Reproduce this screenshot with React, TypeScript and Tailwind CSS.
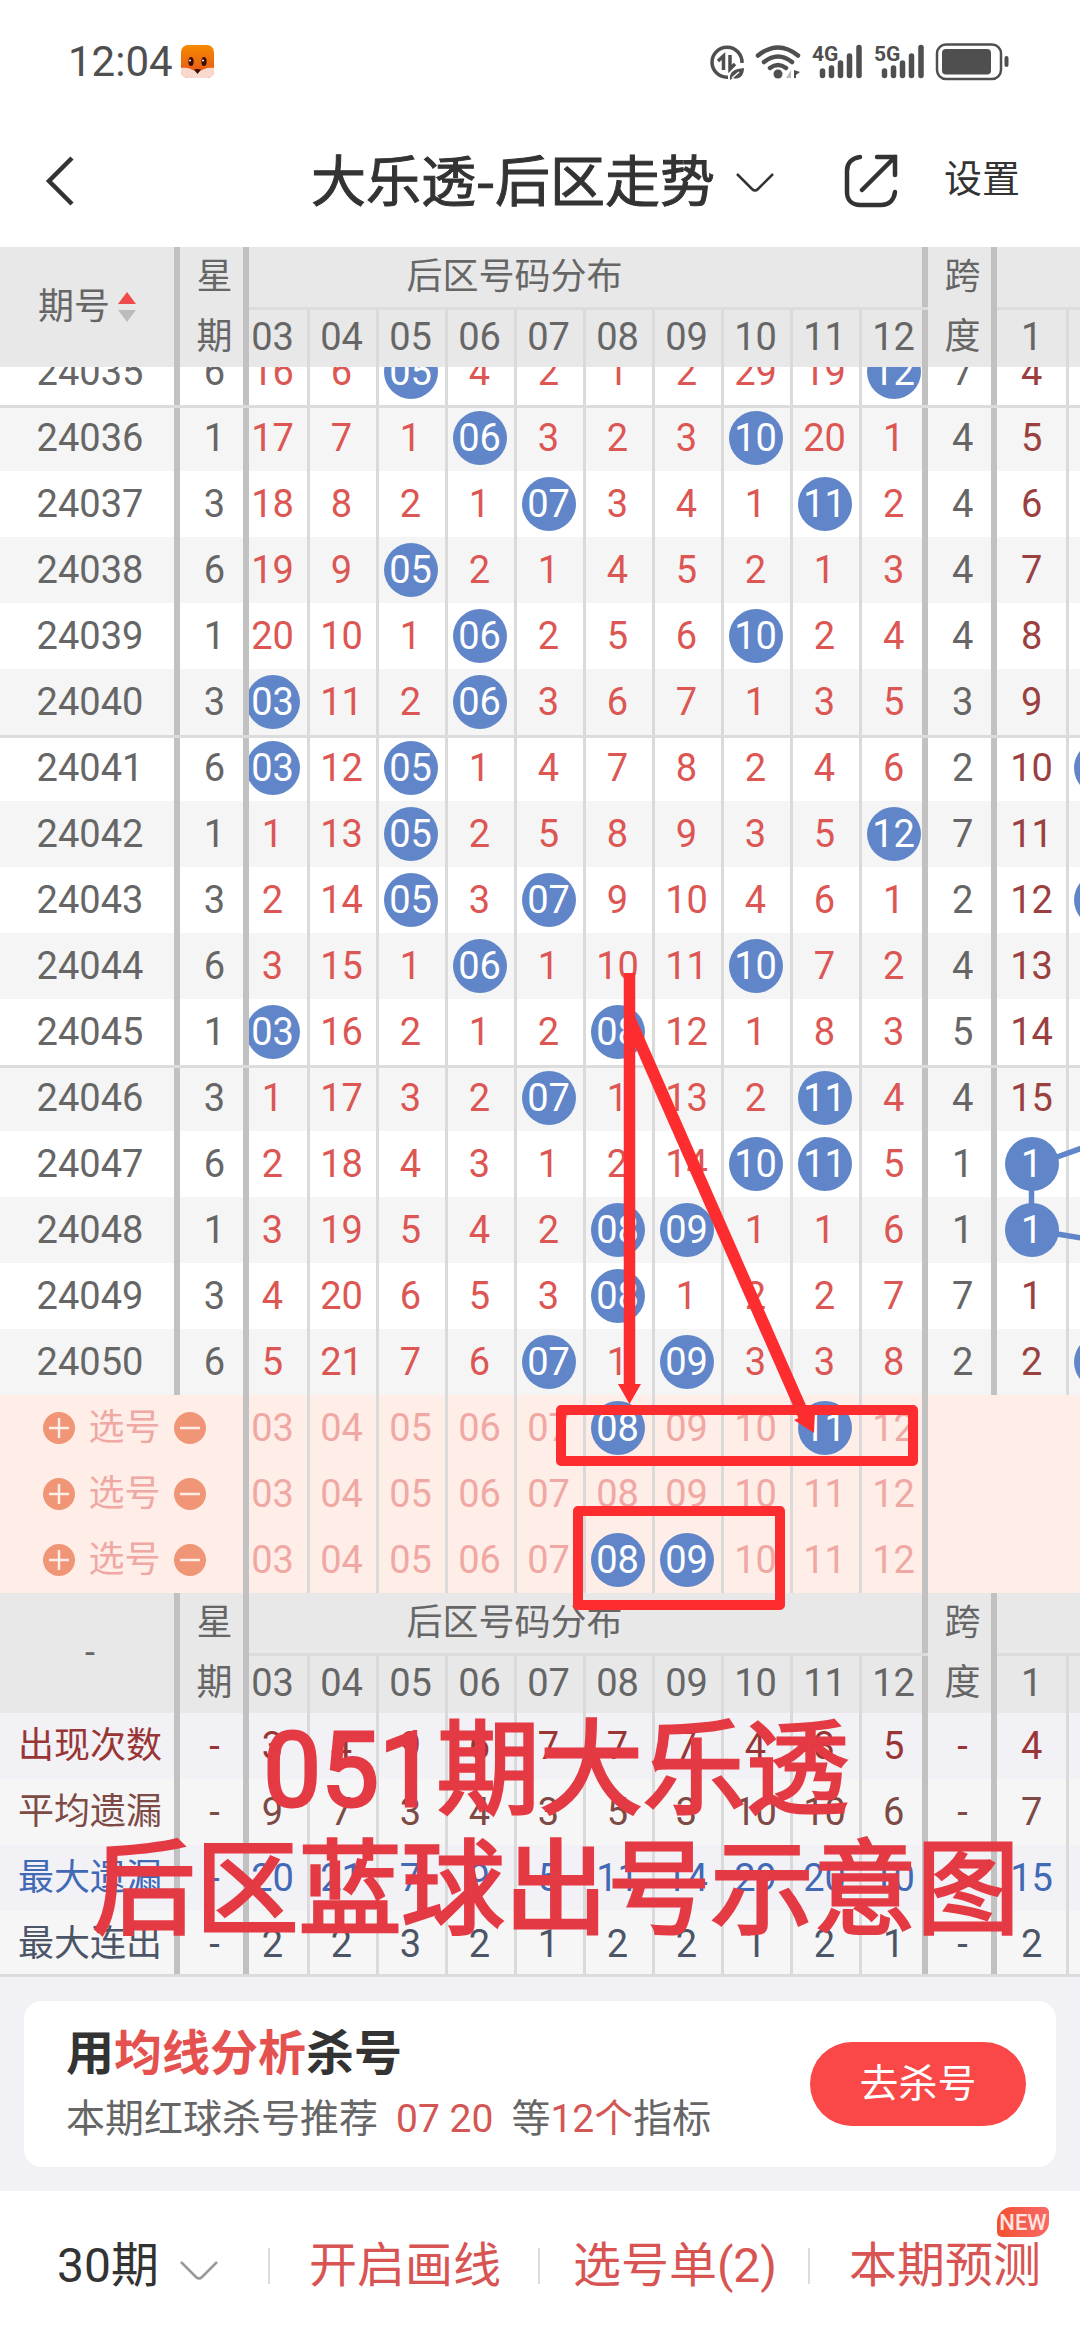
import type { ReactNode } from "react";

const COLUMNS = ["03", "04", "05", "06", "07", "08", "09", "10", "11", "12"];

// Values that start with * are drawn numbers, the others count missed draws
const DRAWS = [
  { id: "24035", day: 6, row: "16 6 *05 4 2 1 2 29 19 *12", span: 7, one: "4" },
  { id: "24036", day: 1, row: "17 7 1 *06 3 2 3 *10 20 1", span: 4, one: "5" },
  { id: "24037", day: 3, row: "18 8 2 1 *07 3 4 1 *11 2", span: 4, one: "6" },
  { id: "24038", day: 6, row: "19 9 *05 2 1 4 5 2 1 3", span: 4, one: "7" },
  { id: "24039", day: 1, row: "20 10 1 *06 2 5 6 *10 2 4", span: 4, one: "8" },
  { id: "24040", day: 3, row: "*03 11 2 *06 3 6 7 1 3 5", span: 3, one: "9" },
  { id: "24041", day: 6, row: "*03 12 *05 1 4 7 8 2 4 6", span: 2, one: "10", next: true },
  { id: "24042", day: 1, row: "1 13 *05 2 5 8 9 3 5 *12", span: 7, one: "11" },
  { id: "24043", day: 3, row: "2 14 *05 3 *07 9 10 4 6 1", span: 2, one: "12", next: true },
  { id: "24044", day: 6, row: "3 15 1 *06 1 10 11 *10 7 2", span: 4, one: "13" },
  { id: "24045", day: 1, row: "*03 16 2 1 2 *08 12 1 8 3", span: 5, one: "14" },
  { id: "24046", day: 3, row: "1 17 3 2 *07 1 13 2 *11 4", span: 4, one: "15" },
  { id: "24047", day: 6, row: "2 18 4 3 1 2 14 *10 *11 5", span: 1, one: "*1" },
  { id: "24048", day: 1, row: "3 19 5 4 2 *08 *09 1 1 6", span: 1, one: "*1" },
  { id: "24049", day: 3, row: "4 20 6 5 3 *08 1 2 2 7", span: 7, one: "1" },
  { id: "24050", day: 6, row: "5 21 7 6 *07 1 *09 3 3 8", span: 2, one: "2", next: true },
];

const PICKS = [["08", "11"], [], ["08", "09"]];

const STATS = [
  { label: "出现次数", row: "3 4 9 6 7 7 7 4 3 5", one: "4", color: "bg-[#f2f1f6] text-[#993535]" },
  { label: "平均遗漏", row: "9 7 3 4 3 5 3 10 10 6", one: "7", color: "bg-[#f6f6f6] text-[#7d4a45]" },
  { label: "最大遗漏", row: "20 21 7 9 5 11 14 29 20 10", one: "15", color: "bg-[#f2f1f6] text-[#4169b5]" },
  { label: "最大连出", row: "2 2 3 2 1 2 2 1 2 1", one: "2", color: "bg-[#f6f6f6] text-[#4c5566]" },
];

const BAR = "shadow-[inset_-6px_0_0_0_#c1c1c1]";
const LINE = "shadow-[inset_3px_0_0_0_#dadada]";
const LINE_BAR = "shadow-[inset_3px_0_0_0_#dadada,inset_-6px_0_0_0_#c1c1c1]";
const TOP_RULE = "inset-shadow-[0_3px_0_0_#dcdcdc]";
const BOTTOM_RULE = "inset-shadow-[0_-3px_0_0_#dcdcdc]";

// The 03 column is partly scrolled under the fixed columns
const columnLine = (i: number) => (i === 0 ? "" : i === 9 ? LINE_BAR : LINE);
const columnShift = (i: number) => (i === 0 ? "-ml-[11px] w-[69px]" : "w-full");

const Value = ({ value }: { value: string }) =>
  value.startsWith("*") ? (
    <span className="flex size-[54px] shrink-0 items-center justify-center rounded-full bg-[#6086c9] text-white">
      {value.slice(1)}
    </span>
  ) : (
    <span>{value}</span>
  );

const Cell = ({
  children,
  line = "",
  color = "",
  rule = "",
  shift = "w-full",
  cut = false,
}: {
  children?: ReactNode;
  line?: string;
  color?: string;
  rule?: string;
  shift?: string;
  cut?: boolean;
}) => (
  <td className={`p-0 ${line} ${color} ${rule}`}>
    <div className={`flex items-end overflow-hidden ${cut ? "h-[38px]" : "h-[66px]"}`}>
      <div className={`flex h-[66px] shrink-0 items-center justify-center ${shift}`}>{children}</div>
    </div>
  </td>
);

const HeadRows = ({ children }: { children: ReactNode }) => (
  <>
    <tr className="h-[60px]">
      <th rowSpan={2} className={`p-0 text-[36px] font-normal ${BAR}`}>
        {children}
      </th>
      <th rowSpan={2} className={`p-0 text-[36px] leading-[60px] font-normal ${BAR}`}>
        星
        <br />期
      </th>
      <th colSpan={10} className={`p-0 pr-[148px] text-[36px] leading-[60px] font-normal ${BAR}`}>
        后区号码分布
      </th>
      <th rowSpan={2} className={`p-0 text-[36px] leading-[60px] font-normal ${BAR}`}>
        跨
        <br />度
      </th>
      <th colSpan={2} className="p-0" />
    </tr>
    <tr className="h-[60px]">
      {COLUMNS.map((n, i) => (
        <th key={n} className={`p-0 leading-[60px] font-normal ${TOP_RULE} ${columnLine(i)}`}>
          <div className={columnShift(i)}>{n}</div>
        </th>
      ))}
      <th className={`p-0 leading-[60px] font-normal ${TOP_RULE}`}>1</th>
      <th className={`p-0 ${TOP_RULE} ${LINE}`} />
    </tr>
  </>
);

const StatusBar = () => (
  <div className="flex h-[107px] items-center justify-between pt-[16px] pr-[70px] pl-[68px] text-[#4f4f4f]">
    <div className="flex items-center gap-[8px]">
      <span className="text-[42px] leading-[48px]">12:04</span>
      <svg className="size-[33px]" viewBox="0 0 33 33">
        <defs>
          <linearGradient id="fox" x1="0" y1="0" x2="0" y2="1">
            <stop offset="0" stopColor="#f78a00" />
            <stop offset="1" stopColor="#e4501c" />
          </linearGradient>
          <clipPath id="foxClip">
            <rect width="33" height="33" rx="7" />
          </clipPath>
        </defs>
        <g clipPath="url(#foxClip)">
          <rect width="33" height="33" fill="url(#fox)" />
          <path d="M0 23C6 22 12 24 16.500 28C21 24 27 22 33 23V33H0Z" fill="#f8d9cd" />
          <ellipse cx="10" cy="16.500" rx="2.600" ry="4.500" fill="#3a0d05" />
          <ellipse cx="23" cy="16.500" rx="2.600" ry="4.500" fill="#3a0d05" />
          <circle cx="9" cy="15.500" r="1" fill="#fff" />
          <circle cx="22" cy="15.500" r="1" fill="#fff" />
          <path d="M13 24.500Q16.500 23.500 20 24.500L16.500 29Z" fill="#3a0d05" />
        </g>
      </svg>
    </div>
    <svg className="h-[38px] w-[300px]" viewBox="710 42 300 38" fill="none" stroke="currentColor">
      {/* Power saving data */}
      <path d="M742 62A15 15 0 1 0 728 76.200" strokeWidth="3.500" />
      <path d="M718 60L723.500 55V69M730 54V68L735 63" strokeWidth="3.500" />
      <path d="M730 79C729 70 735 68 744 67C744 75 739 79 733 77Z" fill="currentColor" stroke="none" />
      <path d="M732 77L739 71" stroke="#fff" strokeWidth="1.500" />
      {/* Wi-Fi */}
      <path d="M758 54.500Q778 38.500 798 54.500M764 61Q778 50 792 61M770 67Q778 61 786 67" strokeWidth="4.500" strokeLinecap="round" />
      <circle cx="778" cy="73" r="4.500" fill="currentColor" stroke="none" />
      <path d="M791 69V77H786Z" fill="#bbb" stroke="none" />
      <path d="M794 69V77H796V74L800 71Z" fill="currentColor" stroke="none" />
      {/* Signal bars */}
      <path d="M822.500 70V74.500M831.500 67V74.500M840.500 62V74.500M849.500 55V74.500M859 46.500V74.500" strokeWidth="5.500" strokeLinecap="round" />
      <path d="M884.500 70V74.500M893.500 67V74.500M902.500 62V74.500M911.500 55V74.500M921 46.500V74.500" strokeWidth="5.500" strokeLinecap="round" />
      <text x="812" y="60" fontSize="21" fontWeight="700" fill="currentColor" stroke="none">4G</text>
      <text x="874" y="60" fontSize="21" fontWeight="700" fill="currentColor" stroke="none">5G</text>
      {/* Battery */}
      <rect x="937" y="43.500" width="64" height="34.500" rx="9" strokeWidth="2.500" />
      <rect x="942" y="48" width="49" height="25.500" rx="4" fill="currentColor" stroke="none" />
      <path d="M1006.500 57V64" strokeWidth="4" strokeLinecap="round" />
    </svg>
  </div>
);

const NavBar = () => (
  <header className="grid h-[140px] grid-cols-[1fr_auto_1fr] items-center text-[#333]">
    <button aria-label="返回" className="ml-[44px] justify-self-start pt-[8px]">
      <svg className="h-[50px] w-[32px]" viewBox="0 0 32 50" fill="none" stroke="currentColor" strokeWidth="4.500">
        <path d="M28 2L5 25L28 48" />
      </svg>
    </button>
    <button className="flex items-center gap-[20px] pl-[6px] font-['Noto_Sans_CJK_SC',sans-serif] text-[55px] leading-[72px] [-webkit-text-stroke:1px_#333]">
      大乐透-后区走势
      <svg className="mt-[12px] h-[22px] w-[40px]" viewBox="0 0 40 22" fill="none" stroke="currentColor" strokeWidth="2.500">
        <path d="M2 2L17 17Q20 20 23 17L38 2" />
      </svg>
    </button>
    <div className="flex items-center justify-end gap-[46px] pr-[60px]">
      <button aria-label="分享" className="pt-[8px]">
        <svg className="size-[54px]" viewBox="0 0 54 54" fill="none" stroke="currentColor" strokeWidth="4.500" strokeLinecap="round">
          <path d="M16 3C8 4 3 9 3 17V38C3 46 8 51 16 51H37C45 51 50 46 51 38" />
          <path d="M33 3H51V21M51 3L18 36" />
        </svg>
      </button>
      <button className="pt-[4px] text-[38px] leading-[48px]">设置</button>
    </div>
  </header>
);

const PickRow = ({ picks }: { picks: string[] }) => (
  <tr className="bg-[#ffeee7] text-[#f0a8a4]">
    <td colSpan={2} className={`p-0 ${BAR}`}>
      <div className="flex h-[66px] items-center justify-center gap-[13px] text-[36px]">
        <button aria-label="添加" className="size-[32px] rounded-full bg-[#f19577]">
          <svg viewBox="0 0 32 32" stroke="#ffeee7" strokeWidth="2.500">
            <path d="M6 16H26M16 6V26" />
          </svg>
        </button>
        选号
        <button aria-label="删除" className="size-[32px] rounded-full bg-[#f19577]">
          <svg viewBox="0 0 32 32" stroke="#ffeee7" strokeWidth="2.500">
            <path d="M6 16H26" />
          </svg>
        </button>
      </div>
    </td>
    {COLUMNS.map((n, i) => (
      <Cell key={n} line={columnLine(i)} shift={columnShift(i)}>
        <button>
          <Value value={picks.includes(n) ? `*${n}` : n} />
        </button>
      </Cell>
    ))}
    <td colSpan={3} className="p-0" />
  </tr>
);

const TrendTable = () => (
  <table className="w-full table-fixed border-collapse text-center text-[38px] leading-[48px] text-[#666]">
    <colgroup>
      <col className="w-[180px]" />
      <col className="w-[69px]" />
      <col className="w-[58px]" />
      {COLUMNS.slice(1).map((n) => (
        <col key={n} className="w-[69px]" />
      ))}
      <col className="w-[69px]" />
      <col className="w-[69px]" />
      <col />
    </colgroup>
    <thead className="bg-[#e8e8e8]">
      <HeadRows>
        <button className="inline-flex items-center gap-[8px] pr-[6px]">
          期号
          <svg className="h-[32px] w-[18px]" viewBox="0 0 18 32">
            <path d="M9 1L18 13H0Z" fill="#f04b4a" />
            <path d="M9 31L0 19H18Z" fill="#bcbcbc" />
          </svg>
        </button>
      </HeadRows>
    </thead>
    <tbody>
      {DRAWS.map((draw, r) => {
        const rule = r > 0 && r % 5 === 1 ? TOP_RULE : "";
        const cut = r === 0;
        return (
          <tr key={draw.id} className={r % 2 ? "bg-[#f5f5f5]" : "bg-white"}>
            <Cell line={BAR} rule={rule} cut={cut}>{draw.id}</Cell>
            <Cell line={BAR} rule={rule} cut={cut}>{draw.day}</Cell>
            {draw.row.split(" ").map((value, i) => (
              <Cell key={i} line={columnLine(i)} shift={columnShift(i)} color="text-[#dc5654]" rule={rule} cut={cut}>
                <Value value={value} />
              </Cell>
            ))}
            <Cell line={BAR} rule={rule} cut={cut}>{draw.span}</Cell>
            <Cell color="text-[#9a403f]" rule={rule} cut={cut}>
              <Value value={draw.one} />
            </Cell>
            <Cell line={LINE} rule={rule} shift="w-[69px]" cut={cut}>
              {draw.next && <span className="size-[54px] rounded-full bg-[#6086c9]" />}
            </Cell>
          </tr>
        );
      })}
      {PICKS.map((picks, i) => (
        <PickRow key={i} picks={picks} />
      ))}
    </tbody>
    <tbody className="bg-[#e8e8e8]">
      <HeadRows>-</HeadRows>
    </tbody>
    <tbody>
      {STATS.map((stat, r) => {
        const rule = r === 3 ? BOTTOM_RULE : "";
        return (
          <tr key={stat.label} className={stat.color}>
            <Cell line={BAR} rule={rule}>
              <span className="text-[36px]">{stat.label}</span>
            </Cell>
            <Cell line={BAR} rule={rule}>-</Cell>
            {stat.row.split(" ").map((value, i) => (
              <Cell key={i} line={columnLine(i)} shift={columnShift(i)} rule={rule}>{value}</Cell>
            ))}
            <Cell line={BAR} rule={rule}>-</Cell>
            <Cell rule={rule}>{stat.one}</Cell>
            <Cell line={LINE} rule={rule} />
          </tr>
        );
      })}
    </tbody>
  </table>
);

const Marks = () => (
  <svg className="pointer-events-none absolute top-0 left-0 h-[1730px] w-[1080px]" viewBox="0 247 1080 1730" fill="none">
    {/* Trend line of the last columns */}
    <path d="M1057 1157L1082 1148M1031.500 1188V1206M1057 1234L1082 1238" stroke="#6086c9" strokeWidth="5.500" />
    <g stroke="#fd2c2f">
      <path d="M629.500 973V1388" strokeWidth="11.500" />
      <path d="M630 1020L805 1418" strokeWidth="12" />
      <rect x="561" y="1410" width="352" height="51" strokeWidth="10" strokeLinejoin="round" />
      <rect x="578" y="1511" width="202" height="94" strokeWidth="10" strokeLinejoin="round" />
    </g>
    <path d="M618 1384H641L629.500 1404ZM794 1420L815 1411L814 1433Z" fill="#fd2c2f" />
  </svg>
);

const PromoCard = () => (
  <section className="bg-[#f2f1f6] px-[24px] py-[24px]">
    <div className="flex h-[166px] items-center justify-between rounded-[18px] bg-white pr-[30px] pl-[42px]">
      <div className="pt-[4px]">
        <h2 className="text-[48px] leading-[66px] font-bold text-[#333]">
          用<span className="text-[#e5514f]">均线分析</span>杀号
        </h2>
        <p className="text-[39px] leading-[64px] text-[#666]">
          本期红球杀号推荐
          <span className="mx-[18px] text-[#d35654]">07 20</span>等<span className="text-[#d35654]">12个</span>指标
        </p>
      </div>
      <button className="h-[84px] w-[216px] rounded-full bg-[#fa4848] text-[39px] leading-[48px] text-white">
        去杀号
      </button>
    </div>
  </section>
);

const Divider = () => <span className="absolute right-0 h-[36px] w-[2px] bg-[#dcdcdc]" />;

const BottomBar = () => (
  <nav className="grid h-[149px] grid-cols-4 text-[48px] leading-[64px] text-[#d85452]">
    <label className="relative flex items-center justify-center gap-[20px] pl-[6px] text-[#333]">
      <select aria-label="期数" className="appearance-none bg-transparent">
        <option>30期</option>
      </select>
      <svg className="mt-[10px] h-[22px] w-[40px]" viewBox="0 0 40 22" fill="none" stroke="#999" strokeWidth="2.500">
        <path d="M2 2L17 17Q20 20 23 17L38 2" />
      </svg>
      <Divider />
    </label>
    <button className="relative flex items-center justify-center">
      开启画线
      <Divider />
    </button>
    <button className="relative flex items-center justify-center">
      选号单(2)
      <Divider />
    </button>
    <button className="relative flex items-center justify-center">
      本期预测
      <span className="absolute top-[16px] right-[31px] h-[30px] w-[52px] rounded-[5px] rounded-tl-[15px] rounded-br-[15px] bg-linear-to-r from-[#f4502a] to-[#f96866] text-center text-[22px] leading-[31px] font-medium text-[#ffe4e0]">
        NEW
      </span>
    </button>
  </nav>
);

const App = () => {
  return (
    <div className="w-full overflow-hidden bg-white font-['Roboto','Noto_Sans_CJK_SC',sans-serif]">
      <StatusBar />
      <NavBar />
      <main className="relative">
        <TrendTable />
        <Marks />
        <p className="absolute inset-x-0 top-[1464px] pl-[32px] text-center text-[103px] leading-[120px] text-[#e43a44] [-webkit-text-stroke:3px_#e43a44]">
          051期大乐透
          <br />
          后区蓝球出号示意图
        </p>
      </main>
      <PromoCard />
      <BottomBar />
    </div>
  );
};

export default App;
